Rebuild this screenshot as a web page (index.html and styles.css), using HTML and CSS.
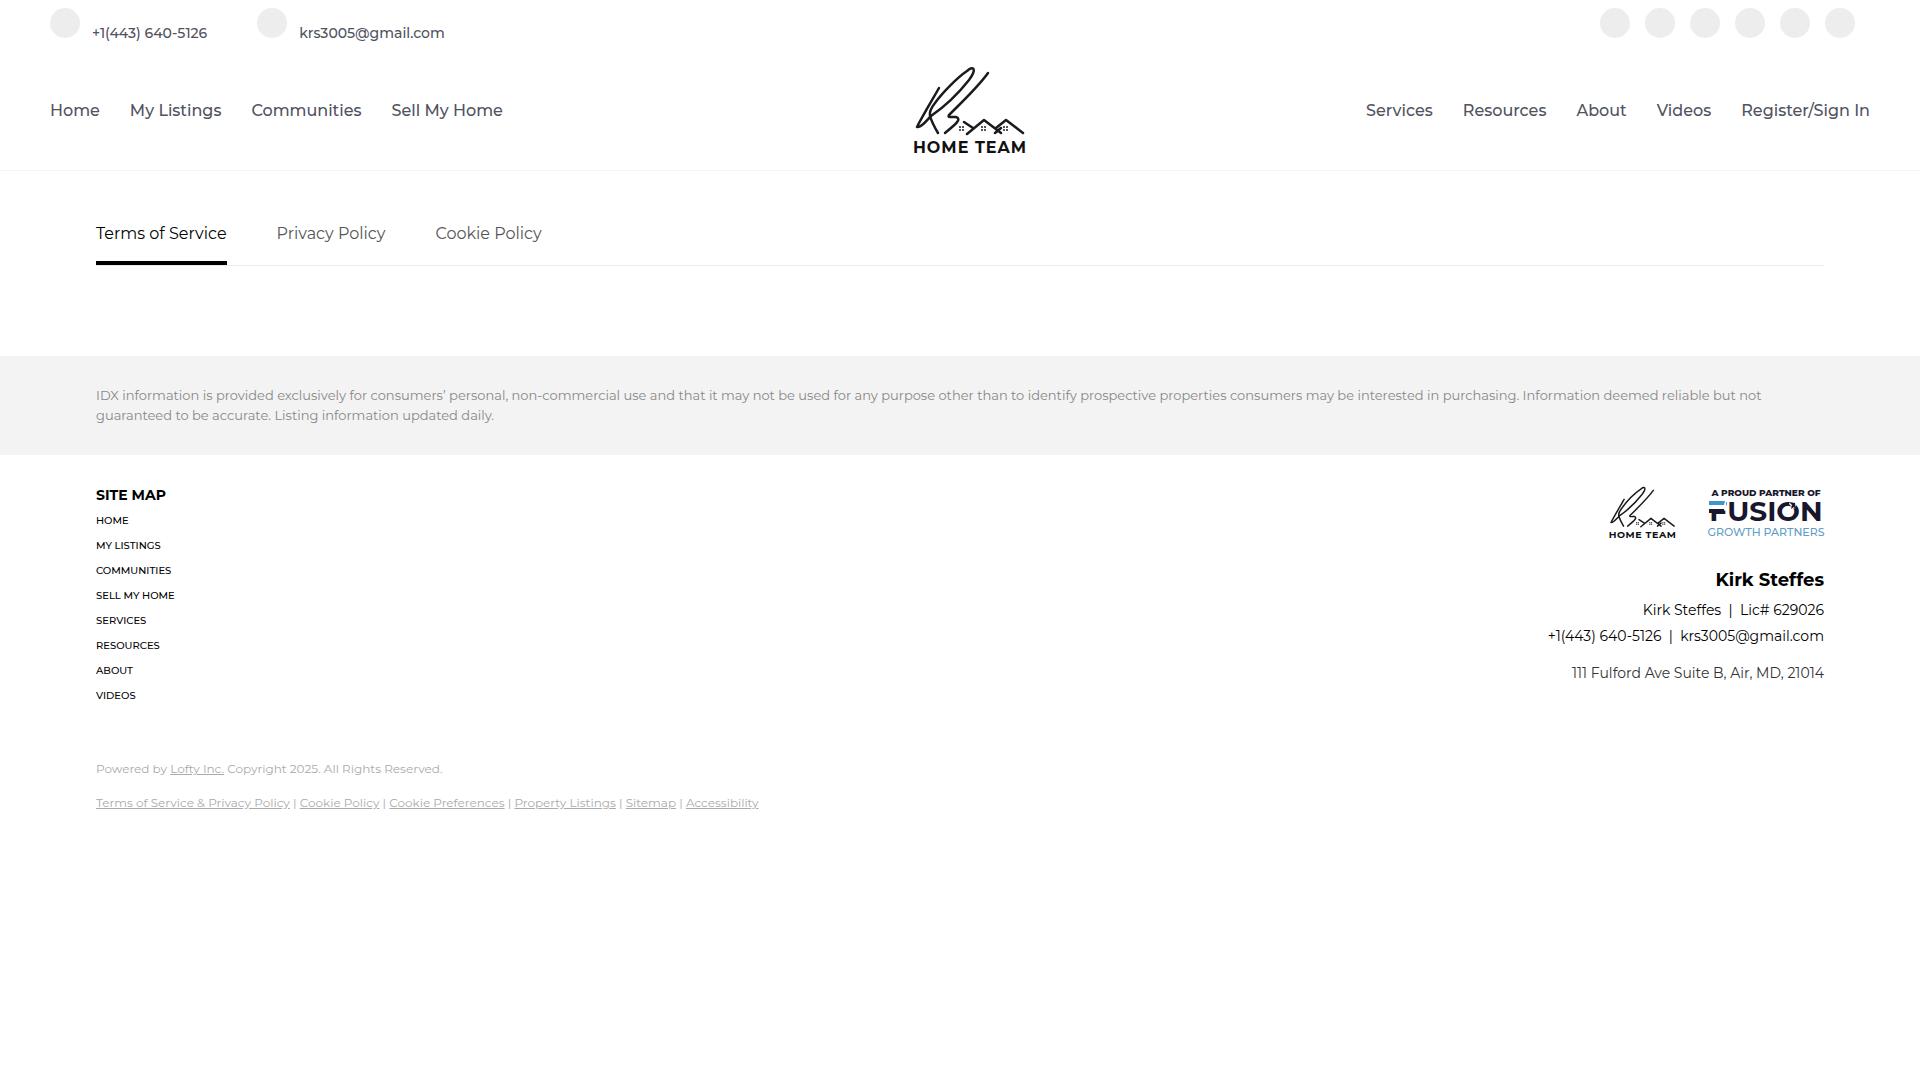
FILE: index.html
```html
<!DOCTYPE html>
<html lang="en">
<head>
    <meta charset="UTF-8">
    <meta name="viewport" content="width=device-width, initial-scale=1.0">
    <title>Terms of Service</title>
    <link rel="stylesheet" href="styles.css">
</head>
<body>
    <header class="header">
        <div class="top-bar">
            <div class="contacts">
                <a class="contact" href="tel:+14436405126"><span class="dot"></span><span class="contact-text">+1(443) 640-5126</span></a>
                <a class="contact" href="mailto:krs3005@gmail.com"><span class="dot"></span><span class="contact-text">krs3005@gmail.com</span></a>
            </div>
            <div class="socials">
                <a class="dot" href="#" aria-label="Facebook"></a>
                <a class="dot" href="#" aria-label="LinkedIn"></a>
                <a class="dot" href="#" aria-label="Twitter"></a>
                <a class="dot" href="#" aria-label="YouTube"></a>
                <a class="dot" href="#" aria-label="Instagram"></a>
                <a class="dot" href="#" aria-label="Zillow"></a>
            </div>
        </div>
        <div class="main-bar">
            <nav class="nav">
                <a href="#">Home</a>
                <a href="#">My Listings</a>
                <a href="#">Communities</a>
                <a href="#">Sell My Home</a>
            </nav>
            <a class="logo" href="#" aria-label="Home Team">
                <svg viewBox="22 13 114 94">
                    <g id="ks-logo">
                        <g fill="none" stroke="#1b1b1f" stroke-width="2.5" stroke-linecap="round" stroke-linejoin="round">
                            <path d="M49 37 C44 46 33 64 27 76 C31 77 36 70 41 65 C54 56 68 43 79 29 C87 18 84 14 77 20 C68 26 53 41 45 52 C41 57 39 61 40 65 C42 72 45 77 48 82"/>
                            <path d="M98 22 C88 36 73 50 60 63 C56 67 61 66 66 66 C72 68 66 73 55 82"/>
                            <path d="M74 71 L83 77 M77 83 L94 69 L111 82 M105 82 L111 77 M106 77 L116 69 L133 82"/>
                        </g>
                        <g fill="none" stroke="#555" stroke-width="2" stroke-dasharray="2 1">
                            <path d="M69 76h5M69 79h5M91 76h5M91 79h5M113 76h5M113 79h5"/>
                        </g>
                        <text class="logo-word" x="80" y="102" text-anchor="middle">HOME TEAM</text>
                    </g>
                </svg>
            </a>
            <nav class="nav nav-right">
                <a href="#">Services</a>
                <a href="#">Resources</a>
                <a href="#">About</a>
                <a href="#">Videos</a>
                <a href="#">Register/Sign In</a>
            </nav>
        </div>
    </header>

    <main class="content">
        <nav class="tabs">
            <a class="tab active" href="#">Terms of Service</a>
            <a class="tab" href="#">Privacy Policy</a>
            <a class="tab" href="#">Cookie Policy</a>
        </nav>
    </main>

    <section class="disclaimer">
        <p>IDX information is provided exclusively for consumers’ personal, non-commercial use and that it may not be used for any purpose other than to identify prospective properties consumers may be interested in purchasing. Information deemed reliable but not guaranteed to be accurate. Listing information updated daily.</p>
    </section>

    <footer class="footer">
        <div class="footer-main">
            <div class="sitemap">
                <h4>SITE MAP</h4>
                <ul>
                    <li><a href="#">HOME</a></li>
                    <li><a href="#">MY LISTINGS</a></li>
                    <li><a href="#">COMMUNITIES</a></li>
                    <li><a href="#">SELL MY HOME</a></li>
                    <li><a href="#">SERVICES</a></li>
                    <li><a href="#">RESOURCES</a></li>
                    <li><a href="#">ABOUT</a></li>
                    <li><a href="#">VIDEOS</a></li>
                </ul>
            </div>
            <div class="agent">
                <div class="partner-logos">
                    <svg class="team-logo" viewBox="22 13 114 94"><use href="#ks-logo"/></svg>
                    <svg class="fusion-logo" viewBox="0 0 116 55">
                        <text class="fusion-top" x="58" y="11" text-anchor="middle">A PROUD PARTNER OF</text>
                        <text class="fusion-word" x="58" y="36" text-anchor="middle">FUSION</text>
                        <!-- blue top bar of the F -->
                        <path d="M0 15h18v9H0z" fill="#fff"/>
                        <path d="M1 16h16l-1 4H1z" fill="#3f95cf"/>
                        <path d="M1 24h15v4H1z" fill="#17172e"/>
                        <!-- arrow on the O -->
                        <path d="M83 14l6 5-3 5-5-5z" fill="#fff"/>
                        <path d="M81 17l6 1 1 7-2-3-3 2 1-4z" fill="#17172e"/>
                        <text class="fusion-bottom" x="58" y="51" text-anchor="middle">GROWTH PARTNERS</text>
                    </svg>
                </div>
                <h3>Kirk Steffes</h3>
                <p>Kirk Steffes&nbsp; |&nbsp; Lic# 629026</p>
                <p><a href="tel:+14436405126">+1(443) 640-5126</a>&nbsp; |&nbsp; <a href="mailto:krs3005@gmail.com">krs3005@gmail.com</a></p>
                <p class="address">111 Fulford Ave Suite B, Air, MD, 21014</p>
            </div>
        </div>
        <div class="legal">
            <p>Powered by <a href="#">Lofty Inc.</a> Copyright 2025. All Rights Reserved.</p>
            <p><a href="#">Terms of Service &amp; Privacy Policy</a> | <a href="#">Cookie Policy</a> | <a href="#">Cookie Preferences</a> | <a href="#">Property Listings</a> | <a href="#">Sitemap</a> | <a href="#">Accessibility</a></p>
        </div>
    </footer>
</body>
</html>
```
FILE: styles.css
```css
* {
    margin: 0;
    padding: 0;
    box-sizing: border-box;
}

body {
    font-family: Montserrat, Inter, sans-serif;
    font-size: 14px;
    color: #000;
    background: #fff;
}

a {
    color: inherit;
    text-decoration: none;
}

ul {
    list-style: none;
}

svg {
    overflow: visible;
}

.logo-word {
    font-size: 16px;
    font-weight: 700;
    letter-spacing: 1px;
    fill: #111;
}

/* Header */
.header {
    color: #505260;
    border-bottom: 1px solid #f3f3f3;
}

.top-bar {
    display: flex;
    justify-content: space-between;
    padding: 8px 65px 0 50px;
}

.contacts {
    display: flex;
    gap: 50px;
}

.contact {
    display: flex;
    gap: 12px;
    font-weight: 500;
}

.contact-text {
    line-height: 20px;
    padding-top: 15px;
}

.dot {
    display: block;
    width: 30px;
    height: 30px;
    border-radius: 50%;
    background: #ededed;
}

.socials {
    display: flex;
    gap: 15px;
}

.main-bar {
    display: grid;
    grid-template-columns: 1fr auto 1fr;
    align-items: center;
    padding: 21px 50px 12px;
}

.nav {
    display: flex;
    gap: 30px;
    font-size: 16px;
    line-height: 20px;
    font-weight: 500;
}

.nav-right {
    justify-content: flex-end;
}

.logo svg {
    display: block;
    width: 114px;
    height: 94px;
    margin-left: 18px;
}

/* Policy tabs */
.content {
    padding: 45px 5% 90px;
}

.tabs {
    display: flex;
    gap: 50px;
    font-size: 16px;
    border-bottom: 1px solid #ebebeb;
}

.tab {
    color: #555;
    line-height: 36px;
    padding-bottom: 9px;
    border-bottom: 4px solid transparent;
}

.tab.active {
    color: #000;
    border-bottom-color: #000;
}

.disclaimer {
    padding: 29px 5% 30px;
    background: #f3f3f3;
    color: #888;
    font-size: 13px;
    line-height: 20px;
}

/* Footer */
.footer {
    padding: 30px 5%;
}

.footer-main {
    display: flex;
    justify-content: space-between;
}

.sitemap h4 {
    font-size: 14px;
    line-height: 20px;
    margin-bottom: 3px;
}

.sitemap li {
    font-size: 10px;
    line-height: 25px;
    font-weight: 500;
}

.agent {
    text-align: right;
}

.partner-logos {
    display: flex;
    justify-content: flex-end;
    gap: 32px;
    margin-bottom: 27px;
}

.team-logo {
    width: 68px;
    height: 56px;
}

.fusion-logo {
    width: 116px;
    height: 55px;
}

.fusion-top {
    font-size: 9px;
    font-weight: 800;
    fill: #17172e;
}

.fusion-word {
    font-size: 28px;
    font-weight: 700;
    fill: #17172e;
}

.fusion-bottom {
    font-size: 11px;
    font-weight: 500;
    fill: #5f9cc5;
}

.agent h3 {
    font-size: 18px;
    line-height: 24px;
    margin-bottom: 5px;
}

.agent p {
    line-height: 26px;
}

.agent .address {
    margin-top: 11px;
    color: #333;
}

.legal {
    margin-top: 51px;
    font-size: 12px;
    line-height: 20px;
    color: #aaa;
}

.legal p + p {
    margin-top: 14px;
}

.legal a {
    text-decoration: underline;
}
```
